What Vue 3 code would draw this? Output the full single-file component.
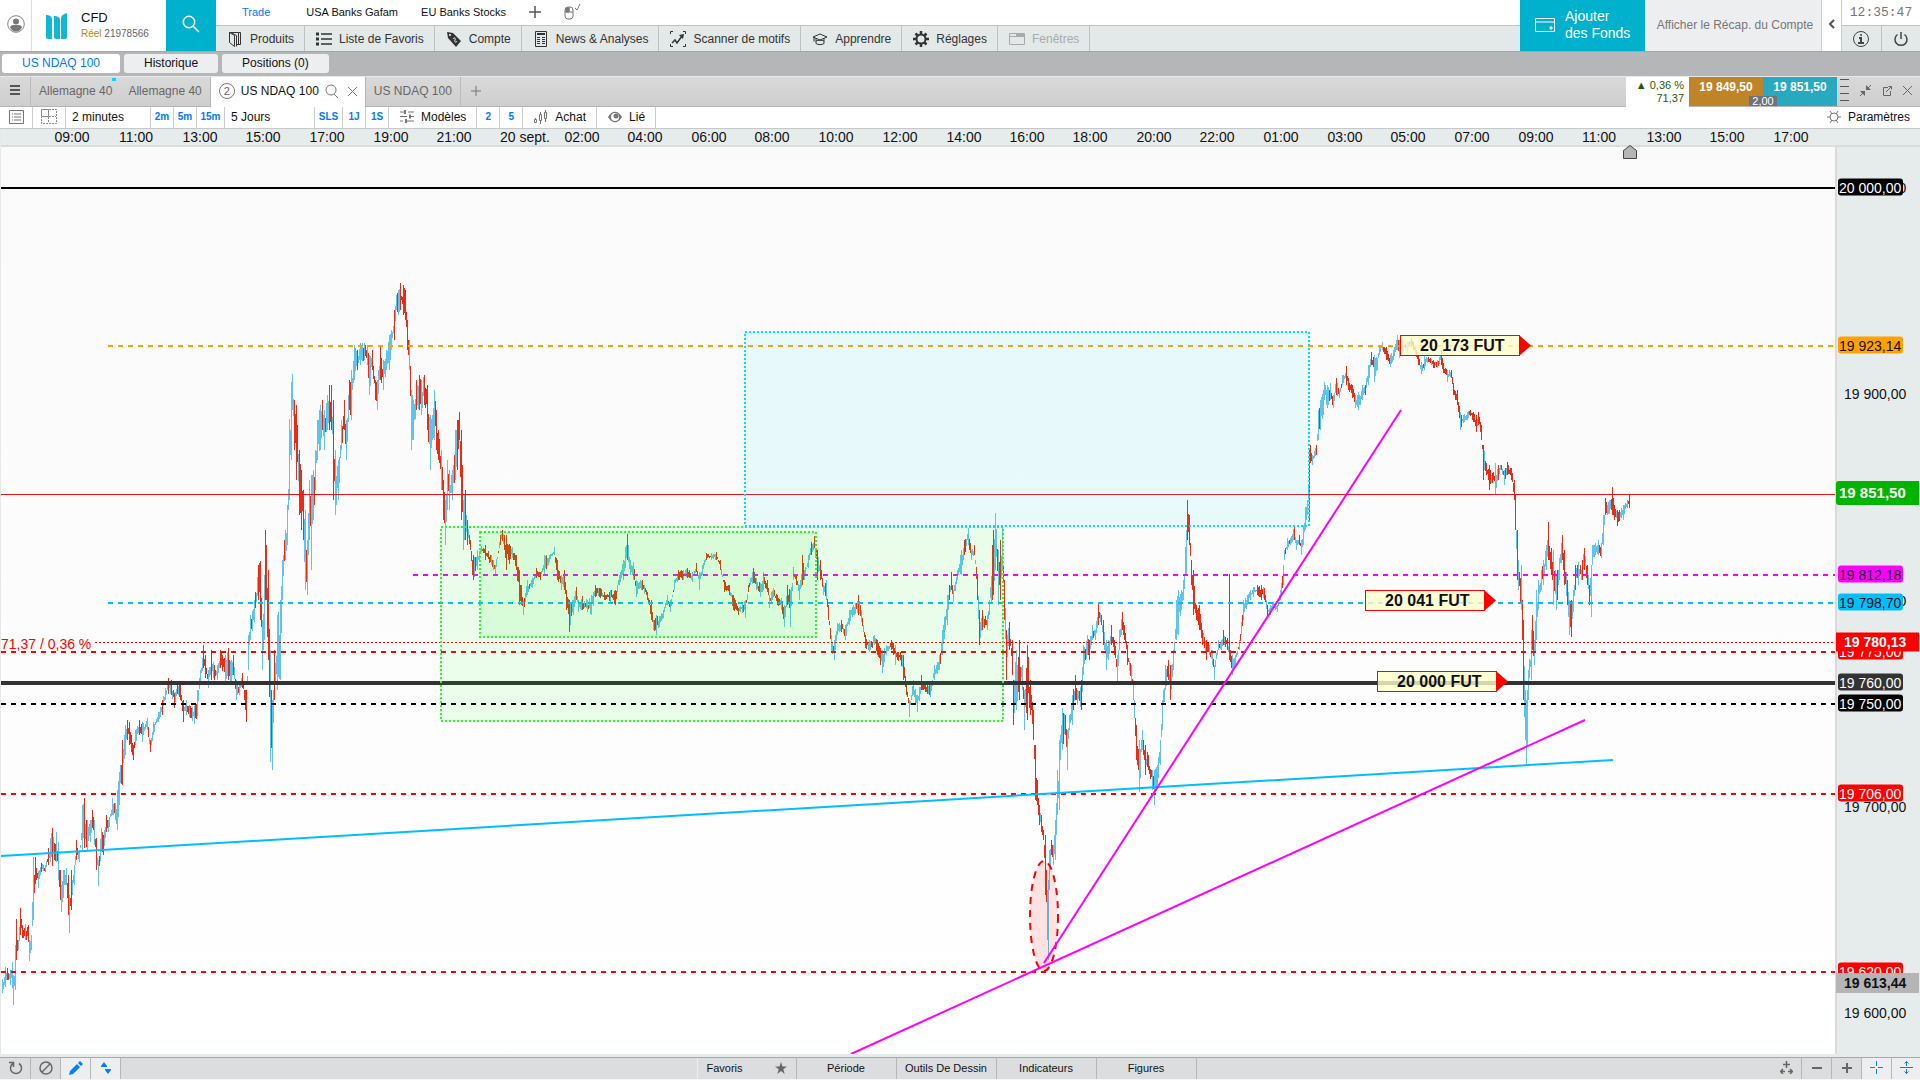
<script setup>
// visible area of the chart canvas
const view = { x: 1, y: 147, w: 1834, h: 907 };

const left = (x) => `${((x - view.x) / view.w) * 100}%`;
const top = (y) => `${((y - view.y) / view.h) * 100}%`;

// x high low
const swings = `
2 979 993,5 967 987,7 968 980,10 970 985,12 962 988,13 975 1005,15 945 990,16 919 960,18 940 950,20 908 935,22 925 938,
25 924 940,28 925 942,29 940 961,31 935 950,33 857 920,35 857 884,38 871 888,41 863 872,45 865 872,48 848 865,52 828 866,
56 832 862,58 842 880,60 870 900,61 885 912,63 870 898,66 868 885,68 875 915,69 895 933,71 870 910,74 865 885,76 840 860,
79 850 862,82 805 850,84 798 848,87 820 850,90 820 842,92 810 828,94 820 845,96 838 870,98 860 886,101 828 850,103 835 855,
106 815 832,108 820 832,112 798 815,115 803 820,117 790 830,119 772 805,122 740 785,125 725 755,127 720 740,129 722 745,
131 735 752,133 745 760,135 730 745,139 720 735,142 722 742,147 718 730,150 740 752,153 722 735,158 712 722,162 700 715,
165 688 700,168 678 694,171 680 695,174 693 708,177 684 694,180 682 700,183 700 722,186 700 715,190 706 718,194 706 724,
197 690 716,200 670 685,203 645 668,205 655 678,208 670 688,211 650 680,214 665 680,217 665 680,220 650 668,225 655 682,
228 648 680,231 660 683,233 655 675,236 680 700,239 685 695,242 673 688,244 690 700,246 690 722,248 635 670,250 615 640,
254 600 622,258 565 600,260 561 620,262 620 670,264 575 640,265 530 600,268 570 660,270 650 762,272 700 770,274 650 700,
277 615 690,280 600 680,282 560 600,285 530 560,287 505 545,289 419 500,291 382 460,292 374 410,294 400 450,296 405 480,
299 450 515,301 470 530,303 490 540,305 510 590,307 540 595,309 480 540,311 475 570,313 470 520,315 450 490,317 420 460,
320 405 450,322 400 430,324 410 450,327 395 430,329 385 430,331 385 430,333 400 500,335 450 515,338 460 500,341 420 450,
344 400 430,346 420 460,349 380 410,351 370 420,354 345 380,357 350 370,360 343 365,364 343 360,367 345 365,369 355 395,
372 350 370,375 380 400,377 380 410,380 345 380,383 360 390,386 350 370,389 335 370,391 330 350,394 310 340,396 295 310,
398 290 315,400 283 310,403 285 315,405 290 320,407 320 350,409 340 370,411 390 450,413 400 440,416 380 410,419 375 410,
421 380 415,424 375 405,427 385 430,430 415 470,432 415 440,434 390 440,436 410 450,438 430 460,441 450 490,443 480 520,
445 500 545,447 460 510,449 470 510,452 470 500,455 430 480,457 420 470,459 412 440,461 430 520,463 500 550,465 490 540,
467 520 545,470 540 550,472 560 575,473 555 580,477 550 570,481 546 552,485 545 560,491 555 565,495 565 575,500 535 545,
502 530 541,506 535 570,512 547 558,516 555 570,519 570 605,523 600 615,527 580 595,532 578 588,536 568 578,540 572 580,
544 555 575,549 555 562,554 547 555,557 560 580,561 575 590,564 570 590,566 590 610,569 600 632,573 600 615,576 587 600,
578 600 612,582 596 610,587 600 612,591 595 615,595 585 597,600 588 598,604 592 600,610 590 602,615 590 605,619 575 585,
623 560 580,627 534 560,630 560 575,633 562 580,636 580 597,642 580 590,647 592 600,651 600 620,653 620 630,656 615 635,
663 610 618,667 595 605,670 600 612,674 580 590,678 570 580,683 570 580,687 568 578,692 572 582,696 563 572,699 572 590,
702 565 575,706 553 560,711 553 560,716 552 560,720 560 570,724 580 592,729 585 595,733 595 610,738 608 615,742 603 613,
745 600 618,748 585 592,753 568 583,756 578 590,760 583 597,763 572 590,767 580 592,769 595 608,773 588 597,777 595 605,
781 598 610,784 605 627,787 585 605,790 590 627,793 567 580,796 575 585,799 585 600,802 555 585,804 570 580,808 555 568,
811 542 555,814 536 548,817 550 580,820 560 580,823 585 595,826 580 600,828 605 620,831 635 652,834 640 660,837 623 635,
841 620 632,845 625 640,849 610 625,853 605 615,858 595 615,861 610 622,865 635 648,869 640 652,874 635 645,877 640 655,
882 650 673,886 645 655,891 640 650,895 645 665,900 652 660,903 655 680,906 685 695,909 700 717,913 680 695,917 695 712,
921 675 690,925 683 692,930 685 697,934 665 680,939 655 670,942 630 655,947 595 625,949 585 600,951 572 590,953 590 602,
957 570 580,961 550 575,964 540 555,968 528 545,971 550 560,974 545 555,977 575 600,979 610 645,982 610 630,987 615 630,
989 600 615,992 545 600,993 530 595,995 513 570,998 550 605,1000 540 600,1002 528 570,1004 580 620,1006 630 680,
1009 622 650,1012 640 675,1013 680 725,1016 650 710,1019 640 700,1022 665 690,1024 690 730,1027 645 720,1030 680 715,
1033 710 740,1035 745 800,1037 780 805,1039 805 825,1041 815 832,1043 830 840,1045 835 895,1047 890 940,1048 880 960,
1049 850 890,1051 840 855,1053 845 865,1055 820 860,1057 770 815,1059 740 810,1060 735 760,1062 708 750,1065 715 735,
1067 730 770,1069 715 730,1072 695 725,1075 675 700,1077 690 705,1081 680 710,1083 645 675,1087 635 655,1089 640 660,
1092 625 640,1095 630 640,1098 603 625,1101 615 625,1103 620 645,1106 640 670,1108 640 660,1111 625 645,1114 640 655,
1117 655 685,1119 630 650,1122 612 630,1124 625 640,1127 645 665,1131 665 685,1133 680 700,1136 725 760,1139 740 792,
1142 730 750,1145 745 775,1148 755 770,1152 770 790,1154 770 805,1157 765 785,1160 740 765,1162 700 730,1165 665 690,
1168 660 680,1170 665 700,1173 650 670,1176 600 640,1178 590 635,1181 590 610,1183 580 600,1186 530 575,1187 500 540,
1189 515 545,1191 560 585,1193 570 615,1196 605 620,1199 605 630,1202 630 645,1206 640 660,1209 645 655,1212 650 665,
1214 665 680,1218 640 650,1221 640 650,1223 630 645,1227 638 650,1230 650 662,1232 655 675,1235 655 665,1239 640 650,
1243 600 620,1247 595 605,1250 590 600,1253 587 597,1257 585 595,1261 585 600,1264 588 600,1267 605 618,1270 605 615,
1273 602 608,1277 605 612,1280 590 600,1283 565 585,1284 550 560,1287 538 550,1290 538 545,1294 525 540,1296 540 550,
1299 535 545,1301 540 555,1303 525 545,1305 507 530,1307 500 515,1309 450 520,1310 445 463,1312 455 465,1316 445 455,
1318 410 440,1320 400 430,1323 390 415,1324 382 400,1327 385 408,1330 383 400,1333 395 408,1336 378 395,1339 390 398,
1342 375 385,1346 366 385,1348 378 390,1352 385 398,1355 395 408,1358 392 410,1362 385 400,1365 385 395,1368 365 385,
1371 352 365,1374 355 382,1377 358 370,1379 345 355,1382 342 350,1386 347 360,1390 355 367,1393 350 360,1397 335 350,
1399 340 358,1403 340 352,1407 342 352,1411 338 345,1415 345 355,1418 355 365,1421 362 374,1424 355 370,1428 357 362,
1433 360 368,1437 360 368,1441 350 365,1443 363 373,1447 370 382,1451 370 378,1453 383 395,1457 390 405,1460 412 430,
1463 415 423,1467 412 420,1470 410 416,1473 412 422,1476 415 432,1478 412 425,1481 425 440,1483 445 480,1486 463 475,
1489 465 490,1492 473 483,1495 463 495,1498 465 480,1501 465 470,1504 470 485,1507 462 475,1511 468 480,1514 480 500,
1515 495 530,1517 530 580,1518 560 590,1521 565 610,1522 600 640,1523 620 700,1525 690 740,1526 700 764,1527 690 745,
1528 670 700,1531 630 680,1532 615 650,1534 640 665,1536 590 640,1538 580 610,1541 570 590,1543 560 585,1546 545 570,
1548 522 560,1551 548 575,1553 550 605,1556 575 610,1557 570 600,1559 558 580,1562 535 560,1564 550 585,1567 580 605,
1569 600 635,1571 600 637,1573 590 612,1575 565 590,1578 562 585,1582 560 580,1584 548 570,1587 565 585,1589 585 605,
1591 565 617,1592 545 565,1595 543 555,1598 540 555,1601 543 558,1603 515 545,1605 498 515,1607 505 515,1612 487 515,
1614 505 520,1617 510 526,1621 508 518,1623 505 520,1627 500 508,1629 495 508
`.trim().split(",").map((row) => row.trim().split(" ").map(Number));

let seed = 7;
const random = () => {
  seed = (seed * 16807) % 2147483647;
  return seed / 2147483647;
};

const buildBars = () => {
  const bars = { up: "", down: "" };
  for (let i = 0; i < swings.length; i++) {
    const [x, high, low] = swings[i];
    const [nextX, nextHigh, nextLow] = swings[i + 1] || [x + 1, high, low];
    for (let px = x; px < nextX; px++) {
      const t = (px - x) / (nextX - x);
      let h = high + (nextHigh - high) * t;
      let l = low + (nextLow - low) * t;
      if (px > x) {
        const cut = (l - h) * 0.45;
        h += random() * cut;
        l -= random() * cut;
      }
      const rising = nextHigh + nextLow < high + low;
      const side = random() < (rising ? 0.85 : 0.25) ? "up" : "down";
      bars[side] += `M${px} ${Math.round(h)}h1V${Math.round(l)}h-1z`;
    }
  }
  bars.down += "M1229 574h1v86h-1z";
  return bars;
};
const bars = buildBars();

const levels = [
  { y: 188, from: 1, kind: "black-solid" },
  { y: 346, from: 108, kind: "orange" },
  { y: 575, from: 413, kind: "magenta" },
  { y: 603, from: 108, kind: "blue" },
  { y: 652, from: 1, kind: "red" },
  { y: 683, from: 1, kind: "thick" },
  { y: 704, from: 1, kind: "black" },
  { y: 794, from: 1, kind: "red" },
  { y: 972, from: 1, kind: "red" },
];

const notes = [
  { x: 1400, y: 335, text: "20 173 FUT" },
  { x: 1365, y: 590, text: "20 041 FUT" },
  { x: 1377, y: 671, text: "20 000 FUT" },
];

const times = [
  [72, "09:00"], [136, "11:00"], [200, "13:00"], [263, "15:00"], [327, "17:00"], [391, "19:00"], [454, "21:00"],
  [525, "20 sept."], [582, "02:00"], [645, "04:00"], [709, "06:00"], [772, "08:00"], [836, "10:00"], [900, "12:00"],
  [964, "14:00"], [1027, "16:00"], [1090, "18:00"], [1154, "20:00"], [1217, "22:00"], [1281, "01:00"], [1345, "03:00"],
  [1408, "05:00"], [1472, "07:00"], [1536, "09:00"], [1599, "11:00"], [1664, "13:00"], [1727, "15:00"], [1791, "17:00"],
];

const prices = [
  { y: 188, text: "20 000,00", kind: "plain" },
  { y: 394, text: "19 900,00", kind: "plain" },
  { y: 601, text: "19 800,00", kind: "plain" },
  { y: 807, text: "19 700,00", kind: "plain" },
  { y: 1013, text: "19 600,00", kind: "plain" },
  { y: 187, text: "20 000,00", kind: "tag black" },
  { y: 345, text: "19 923,14", kind: "tag orange" },
  { y: 574, text: "19 812,18", kind: "tag magenta" },
  { y: 602, text: "19 798,70", kind: "tag blue" },
  { y: 651, text: "19 775,00", kind: "tag red" },
  { y: 682, text: "19 760,00", kind: "tag dark" },
  { y: 703, text: "19 750,00", kind: "tag black" },
  { y: 793, text: "19 706,00", kind: "tag red" },
  { y: 971, text: "19 620,00", kind: "tag red" },
  { y: 493, text: "19 851,50", kind: "wide green" },
  { y: 642, text: "19 780,13", kind: "wide close" },
  { y: 983, text: "19 613,44", kind: "wide cursor" },
];
</script>

<template>
  <div class="app">
    <header class="header">
      <button class="user" aria-label="Profil">
        <svg width="18" height="18" viewBox="0 0 18 18">
          <circle cx="9" cy="9" r="8.3" fill="#fff" stroke="#888" />
          <circle cx="9" cy="6.5" r="3" fill="#777" />
          <path d="M3 12c1-2 3-2 6-2s5 0 6 2c-1.5 3-3 4.5-6 4.5S4.5 15 3 12z" fill="#777" />
        </svg>
      </button>
      <div class="brand">
        <svg width="22" height="26" viewBox="0 0 22 26" fill="#0fb9d6">
          <path d="M0 2c3 0 6 1 6 4v20H2c-1 0-2-1-2-2zM8 3c3 0 6 1 6 4v19h-4c-1 0-2-1-2-2zM15 6c0-4 3-5 6-6v24c0 1-1 2-2 2h-4z" />
        </svg>
        <div class="account">
          <span class="type">CFD</span>
          <span class="number"><b>Réel</b> 21978566</span>
        </div>
      </div>
      <button class="search" aria-label="Rechercher">
        <svg width="18" height="18" viewBox="0 0 18 18" fill="none" stroke="#fff" stroke-width="1.5">
          <circle cx="7" cy="7" r="5.7" />
          <path d="M11 11l6 6" />
        </svg>
      </button>

      <div class="navs">
        <nav class="workspaces">
          <a href="#" class="current">Trade</a>
          <a href="#">USA Banks Gafam</a>
          <a href="#">EU Banks Stocks</a>
          <button aria-label="Ajouter un espace">
            <svg width="12" height="12" viewBox="0 0 12 12" stroke="#555" stroke-width="1.5"><path d="M6 0v12M0 6h12" /></svg>
          </button>
          <button aria-label="Souris">
            <svg width="17" height="16" viewBox="0 0 17 16" fill="none" stroke="#777">
              <rect x="1" y="3" width="8" height="12" rx="3" />
              <path d="M1 8h8M5 3v5M11 4l2 2 3-6" />
              <path d="M2 4h3v4H2z" fill="#777" />
            </svg>
          </button>
        </nav>
        <nav class="menu">
          <button>
            <svg width="16" height="16" viewBox="0 0 16 16" fill="none" stroke="#333"><path d="M2.500 1.500h9v12h-2M11.500 1.500h2v12h-3M2.500 1.500v10l5 4v-11zM4 1.500l5.500 3v11" /></svg>
            Produits
          </button>
          <button>
            <svg width="16" height="16" viewBox="0 0 16 16" fill="none" stroke="#333" stroke-width="1.5"><path d="M5 3h11M5 8h11M5 13h11" /><path d="M0 3h3M0 8h3M0 13h3" stroke-width="3" /></svg>
            Liste de Favoris
          </button>
          <button>
            <svg width="16" height="16" viewBox="0 0 16 16"><path d="M1 1l6 1 8 8-5 6-8-9z" fill="#333" /><circle cx="4" cy="4" r="1" fill="#fff" /><path d="M7 8c1-2 3-1 2 1s1 3 2 1" fill="none" stroke="#fff" /></svg>
            Compte
          </button>
          <button>
            <svg width="16" height="16" viewBox="0 0 16 16" fill="none" stroke="#333"><path d="M2.500.5h11v15h-11z" /><path d="M4 3h8" stroke-width="2" /><path d="M4 6.500h3M4 8.500h3M4 10.500h3M4 12.500h3M9 6.500h3M9 10.500h3M9 12.500h3M9 8.500h3" /></svg>
            News &amp; Analyses
          </button>
          <button>
            <svg width="16" height="16" viewBox="0 0 16 16" fill="none" stroke="#333"><path d="M.5 3V.5H3M13 .5h2.500V3M15.500 13v2.500H13M3 15.500H.5V13" /><path d="M2 12l3-3 2 3 5-7" stroke-width="1.5" /><path d="M9 4l5-1-1 5z" fill="#333" stroke="none" /></svg>
            Scanner de motifs
          </button>
          <button>
            <svg width="16" height="16" viewBox="0 0 16 16" fill="none" stroke="#333"><path d="M1 6l7-3 7 3-7 3zM4 7.500v5c2 1.500 6 1.500 8 0v-5M2 6.500v4M4 10c2-1 6-1 8 0" /></svg>
            Apprendre
          </button>
          <button>
            <svg width="16" height="16" viewBox="0 0 16 16" fill="none" stroke="#333"><circle cx="8" cy="8" r="4.5" stroke-width="2" /><path d="M8 0v3M8 13v3M0 8h3M13 8h3M2.500 2.500l2 2M11.500 11.500l2 2M13.500 2.500l-2 2M4.500 11.500l-2 2" stroke-width="2.5" /></svg>
            Réglages
          </button>
          <button class="off" disabled>
            <svg width="16" height="16" viewBox="0 0 16 16" fill="none" stroke="#aaa"><path d="M.5 2.500h15v11H.5zM0 5.500h16" /><path d="M7 4h8" stroke-width="2" /></svg>
            Fenêtres
          </button>
        </nav>
      </div>

      <button class="funds">
        <svg width="20" height="14" viewBox="0 0 20 14" fill="none" stroke="#fff"><path d="M.5.5h19v13H.5zM0 4h20" /><path d="M15 9h2v2h-2z" fill="#fff" /></svg>
        <span>Ajouter<br />des Fonds</span>
      </button>
      <button class="summary">Afficher le Récap. du Compte</button>
      <button class="collapse" aria-label="Réduire">
        <svg width="6" height="10" viewBox="0 0 6 10" fill="none" stroke="#555" stroke-width="2"><path d="M5 1L1 5l4 4" /></svg>
      </button>
      <div class="status">
        <time>12:35:47</time>
        <div class="power">
          <button aria-label="Informations">
            <svg width="18" height="18" viewBox="0 0 18 18" fill="none" stroke="#444"><circle cx="9" cy="9" r="7.5" /><path d="M7 8h2v5M6 13h6" stroke-width="2" /><circle cx="9" cy="5" r="1" fill="#444" stroke="none" /></svg>
          </button>
          <button aria-label="Déconnexion">
            <svg width="16" height="16" viewBox="0 0 16 16" fill="none" stroke="#444" stroke-width="1.5"><path d="M4.500 3.500a6 6 0 1 0 7 0M8 1v7" /></svg>
          </button>
        </div>
      </div>
    </header>

    <nav class="panels">
      <button class="active">US NDAQ 100</button>
      <button>Historique</button>
      <button>Positions (0)</button>
    </nav>

    <section class="charts">
      <button class="burger" aria-label="Menu">
        <svg width="10" height="11" viewBox="0 0 10 11" stroke="#555" stroke-width="2"><path d="M0 1h10M0 5h10M0 9h10" /></svg>
      </button>
      <button class="tab">Allemagne 40<i class="dot"></i></button>
      <button class="tab">Allemagne 40</button>
      <div class="tab open">
        <span class="count">2</span>
        <span class="name">US NDAQ 100</span>
        <svg width="14" height="14" viewBox="0 0 14 14" fill="none" stroke="#777"><circle cx="6" cy="6" r="5" /><path d="M9 10l4 4" /></svg>
        <button class="close" aria-label="Fermer l'onglet">
          <svg width="9" height="9" viewBox="0 0 9 9" stroke="#777"><path d="M0 0l9 9M9 0L0 9" /></svg>
        </button>
      </div>
      <button class="tab last">US NDAQ 100</button>
      <button class="plus" aria-label="Nouvel onglet">
        <svg width="10" height="10" viewBox="0 0 10 10" stroke="#777"><path d="M5 0v10M0 5h10" /></svg>
      </button>

      <div class="change"><span>▲ 0,36 %</span><span>71,37</span></div>
      <div class="quotes">
        <button class="sell">19 849,50</button>
        <button class="buy">19 851,50</button>
        <span class="spread">2,00</span>
      </div>
      <div class="tools">
        <svg width="9" height="24" viewBox="0 0 9 24" stroke="#555"><path d="M0 .5h9M0 7.500h9M0 14.500h9M0 21.500h9" /></svg>
        <button aria-label="Réduire le graphique">
          <svg width="11" height="11" viewBox="0 0 11 11" fill="#666" stroke="#666"><path d="M11 0L8 3M0 11l3-3" /><path d="M6 0v5h5zM0 6h5v5z" stroke="none" /></svg>
        </button>
        <button aria-label="Détacher">
          <svg width="9" height="10" viewBox="0 0 9 10" fill="none" stroke="#666"><path d="M5 1.500H.5v8h7V5M3 6l5-5M5.500.5h3v3" /></svg>
        </button>
        <button aria-label="Fermer">
          <svg width="9" height="9" viewBox="0 0 9 9" stroke="#666"><path d="M0 0l9 9M9 0L0 9" /></svg>
        </button>
      </div>
    </section>

    <div class="toolbar">
      <button class="cell square" aria-label="Liste">
        <svg width="15" height="14" viewBox="0 0 15 14" fill="none" stroke="#777"><path d="M.5.5h14v13H.5zM3 4h1M5 4h7M3 7h1M5 7h7M3 10h1M5 10h7" /></svg>
      </button>
      <button class="cell square" aria-label="Disposition">
        <svg width="16" height="15" viewBox="0 0 16 15" fill="none" stroke="#888"><path d="M.5.5h7v7h-7z" /><path d="M8 .5h7.500v14H.5V8M7.500 8v6M8 7.500h7" stroke-dasharray="2 1" /></svg>
      </button>
      <button class="cell period">2 minutes</button>
      <button class="cell chip">2m</button>
      <button class="cell chip">5m</button>
      <button class="cell chip long">15m</button>
      <button class="cell range">5 Jours</button>
      <button class="cell chip long">SLS</button>
      <button class="cell chip">1J</button>
      <button class="cell chip">1S</button>
      <button class="cell models">
        <svg width="14" height="13" viewBox="0 0 14 13" stroke="#777"><path d="M0 2h14M0 6.500h14M0 11h14" /><path d="M6 0v4M9 4.500v4M5 9v4" stroke-width="4" stroke="#fff" /><path d="M5 0v4M10 4.500v4M6 9v4" stroke-width="2" /></svg>
        Modèles
      </button>
      <button class="cell chip">2</button>
      <button class="cell chip">5</button>
      <button class="cell order">
        <svg width="14" height="14" viewBox="0 0 14 14" fill="#fff" stroke="#777"><path d="M1.500 8v5M6.500 2v12M11.500 0v12" /><path d="M.5 9.500h2v3h-2zM5.500 4.500h2v6h-2zM10.500 2.500h2v6h-2z" /></svg>
        Achat
      </button>
      <button class="cell linked">
        <svg width="14" height="12" viewBox="0 0 14 12"><path d="M0 6c4-7 10-7 14 0-4 7-10 7-14 0z" fill="#777" /><circle cx="7" cy="6" r="4" fill="#fff" /><circle cx="8" cy="5" r="2.5" fill="#777" /></svg>
        Lié
      </button>
      <button class="settings">
        <svg width="14" height="14" viewBox="0 0 14 14" fill="none" stroke="#777"><circle cx="7" cy="7" r="4" /><path d="M0 7h3M11 7h3M3 1l2 3M11 1L9 4M3 13l2-3M11 13l-2-3" /></svg>
        Paramètres
      </button>
    </div>

    <main class="chart">
      <div class="times">
        <span v-for="[x, label] in times" :key="x" :style="{ left: left(x) }">{{ label }}</span>
      </div>
      <div class="corner"></div>

      <div class="plot">
        <svg class="canvas" viewBox="1 147 1834 907" preserveAspectRatio="none">
          <path class="up" :d="bars.up" />
          <path class="down" :d="bars.down" />
          <line v-for="l in levels" :key="l.y" :class="['level', l.kind]" :x1="l.from" :x2="1835" :y1="l.y" :y2="l.y" />
          <path class="last-price" d="M1 494h1834v1H1z" />
          <path class="previous" d="M95 642H1835" />
          <rect class="zone green" x="441" y="527" width="562" height="194" />
          <rect class="zone green inner" x="480" y="532" width="336" height="105" />
          <rect class="zone cyan" x="745" y="332" width="564" height="194" />
          <ellipse class="low" cx="1044" cy="916" rx="14" ry="55" />
          <path class="trend blue" d="M1 856L1613 760" />
          <path class="trend" d="M1044 963L1401 410M851 1054L1585 720" />
        </svg>
        <span class="delta" :style="{ top: top(644) }">71,37 / 0,36 %</span>
        <span v-for="n in notes" :key="n.text" class="note" :style="{ left: left(n.x), top: top(n.y) }">{{ n.text }}</span>
        <svg class="marker" :style="{ left: left(1630) }" width="14" height="14" viewBox="0 0 14 14">
          <path d="M.5 5.500L7 .5l6.500 5v8H.5z" fill="#b5b5b5" stroke="#444" />
        </svg>
      </div>

      <div class="prices">
        <span v-for="p in prices" :key="p.kind + p.text" :class="['price', p.kind]" :style="{ top: top(p.y) }">{{ p.text }}</span>
      </div>
    </main>

    <footer class="footer">
      <button class="icon" aria-label="Rafraîchir">
        <svg width="14" height="14" viewBox="0 0 14 14" fill="none" stroke="#666" stroke-width="1.5"><path d="M4 2.500a5.500 5.500 0 1 0 6 0M0 1.500h4.500V6" /></svg>
      </button>
      <button class="icon" aria-label="Effacer">
        <svg width="14" height="14" viewBox="0 0 14 14" fill="none" stroke="#666" stroke-width="1.5"><circle cx="7" cy="7" r="6" /><path d="M3 11l8-8" /></svg>
      </button>
      <button class="icon lit" aria-label="Dessiner">
        <svg width="14" height="14" viewBox="0 0 14 14" fill="#0080ff"><path d="M0 14l1-4 7-7 3 3-7 7zM9 2l2-2 3 3-2 2z" /></svg>
      </button>
      <button class="icon lit" aria-label="Ordre">
        <svg width="12" height="12" viewBox="0 0 12 12" fill="#0080ff"><path d="M1 4l3-4 3 4v1H1zM5 7h6v1l-3 4-3-4z" /></svg>
      </button>
      <div class="groups">
        <button class="favorites">Favoris
          <svg width="12" height="12" viewBox="0 0 12 12" fill="#666"><path d="M6 0l1.500 4.500H12L8.300 7.200 9.700 12 6 9.100 2.300 12l1.400-4.800L0 4.500h4.500z" /></svg>
        </button>
        <button>Période</button>
        <button>Outils De Dessin</button>
        <button>Indicateurs</button>
        <button>Figures</button>
      </div>
      <div class="zoom">
        <button class="icon" aria-label="Ajuster">
          <svg width="13" height="13" viewBox="0 0 13 13" fill="none" stroke="#666" stroke-width="1.5"><path d="M6.500 0v7M3 3.500h7M1 10.500h4M8 10.500h4M3 8L.5 10.500 3 13M10 8l2.500 2.500L10 13" /></svg>
        </button>
        <button class="icon" aria-label="Zoom arrière">
          <svg width="10" height="10" viewBox="0 0 10 10" stroke="#666" stroke-width="2"><path d="M0 5h10" /></svg>
        </button>
        <button class="icon" aria-label="Zoom avant">
          <svg width="10" height="10" viewBox="0 0 10 10" stroke="#666" stroke-width="2"><path d="M0 5h10M5 0v10" /></svg>
        </button>
        <button class="icon lit" aria-label="Réticule">
          <svg width="13" height="13" viewBox="0 0 13 13" stroke="#0080ff"><path d="M6.500 0v5M6.500 8v5M0 6.500h5M8 6.500h5" /></svg>
        </button>
        <button class="icon lit" aria-label="Échelle">
          <svg width="13" height="13" viewBox="0 0 13 13" fill="none" stroke="#0080ff"><path d="M0 6.500h13M6.500 0v5M6.500 8v5M4.500 2.500l2-2 2 2M4.500 10.500l2 2 2-2" /></svg>
        </button>
      </div>
    </footer>
  </div>
</template>

<style>
body {
  margin: 0;
}
</style>

<style scoped>
.app {
  display: flex;
  flex-direction: column;
  min-height: 100vh;
  font-family: "Liberation Sans", Arial, sans-serif;
  font-size: 12px;
  color: #111;
  background: #fff;
}
.app * {
  box-sizing: border-box;
}
button {
  display: flex;
  align-items: center;
  flex: none;
  margin: 0;
  padding: 0;
  border: 0;
  font: inherit;
  color: inherit;
  white-space: nowrap;
  background: none;
}
svg {
  display: block;
  flex: none;
}

/* header */
.header {
  display: flex;
  height: 52px;
  border-bottom: 1px solid #9fa6b2;
}
.user {
  justify-content: center;
  width: 32px;
  padding-bottom: 4px;
  border-right: 1px solid #ddd;
}
.brand {
  display: flex;
  align-items: center;
  gap: 13px;
  width: 134px;
  padding-left: 14px;
}
.account {
  display: flex;
  flex-direction: column;
  line-height: 16px;
}
.type {
  font-size: 13px;
}
.number {
  font-size: 10px;
  color: #666;
}
.number b {
  font-weight: normal;
  color: #b8860b;
}
.search {
  justify-content: center;
  width: 50px;
  padding-bottom: 4px;
  background: #00b1cd;
}
.navs {
  flex: 1;
  min-width: 0;
}
.workspaces {
  display: flex;
  align-items: center;
  gap: 23px;
  height: 25px;
  padding-left: 26px;
  padding-bottom: 2px;
  font-size: 11px;
}
.workspaces a {
  color: #111;
  text-decoration: none;
}
.workspaces .current {
  margin-right: 13px;
  color: #0078ff;
}
.menu {
  display: flex;
  height: 26px;
  color: #333;
  background: #e3e8e8;
  border-top: 1px solid #bfc4c4;
}
.menu button {
  gap: 7px;
  padding: 0 10px 0 11px;
  border-right: 1px solid #bbc0c0;
}
.menu .off {
  color: #aaa;
}
.funds {
  gap: 10px;
  width: 125px;
  padding-left: 15px;
  padding-bottom: 2px;
  font-size: 14px;
  line-height: 17px;
  text-align: left;
  color: #fff;
  background: #00b1cd;
}
.summary {
  justify-content: center;
  width: 177px;
  padding-left: 4px;
  padding-bottom: 2px;
  color: #777;
  background: #edeef0;
  border-right: 1px solid #ccc;
}
.collapse {
  justify-content: center;
  width: 19px;
  padding-bottom: 4px;
}
.status {
  display: flex;
  flex-direction: column;
  width: 79px;
  border-left: 1px solid #ccc;
}
.status time {
  height: 25px;
  font-family: "Liberation Mono", monospace;
  font-size: 13px;
  line-height: 26px;
  text-align: center;
  color: #777;
}
.power {
  display: flex;
  height: 26px;
  background: #e3e8e8;
  border-top: 1px solid #bfc4c4;
}
.power button {
  flex: 1;
  justify-content: center;
}
.power button + button {
  border-left: 1px solid #bbc0c0;
}

/* panel switcher */
.panels {
  display: flex;
  gap: 4px;
  height: 24px;
  padding: 2px;
  background: #b5b6b8;
}
.panels button {
  height: 19px;
  padding: 0 20px 2px;
  background: #edeef0;
  border-radius: 3px;
}
.panels .active {
  color: #0078ff;
  background: #fff;
}

/* chart tabs */
.charts {
  display: flex;
  height: 31px;
  color: #666;
  background: linear-gradient(#d9d9d9, #cecece);
  border-top: 1px solid #e8e8e8;
  border-bottom: 1px solid #b5b5b5;
}
.burger {
  justify-content: center;
  width: 31px;
  padding-bottom: 2px;
  border-right: 1px solid #bbb;
}
.tab {
  position: relative;
  display: flex;
  align-items: center;
  padding: 0 8px 2px;
}
.dot {
  position: absolute;
  top: 1px;
  right: 4px;
  width: 4px;
  height: 3px;
  background: #00d8ff;
}
.open {
  gap: 6px;
  height: 30px;
  color: #111;
  background: #fff;
  border-left: 1px solid #b5b5b5;
  border-right: 1px solid #b5b5b5;
}
.count {
  width: 16px;
  height: 16px;
  font-size: 11px;
  line-height: 14px;
  text-align: center;
  color: #666;
  border: 1px solid #777;
  border-radius: 50%;
}
.close {
  padding-left: 3px;
}
.last {
  border-right: 1px solid #bbb;
}
.plus {
  padding-left: 10px;
  padding-bottom: 2px;
}
.change {
  display: flex;
  flex-direction: column;
  justify-content: center;
  width: 63px;
  height: 30px;
  margin-left: auto;
  padding-right: 5px;
  font-size: 11px;
  line-height: 13px;
  text-align: right;
  white-space: nowrap;
  color: #1f5c0a;
  background: #fff;
}
.quotes {
  position: relative;
  display: flex;
}
.quotes button {
  justify-content: center;
  width: 74px;
  padding-bottom: 10px;
  font-weight: bold;
  color: #fff;
}
.sell {
  background: #c08428;
}
.buy {
  background: #27aabf;
}
.spread {
  position: absolute;
  left: 60px;
  bottom: 0;
  width: 28px;
  font-size: 11px;
  line-height: 10px;
  text-align: center;
  color: #fff;
  background: #6e7378;
}
.tools {
  display: flex;
  align-items: center;
  justify-content: space-between;
  width: 83px;
  padding: 0 8px 2px 3px;
}

/* toolbar */
.toolbar {
  display: flex;
  height: 22px;
  border-bottom: 1px solid #c5c8c8;
}
.toolbar button {
  padding-bottom: 2px;
}
.cell {
  border-right: 1px solid #ccc;
}
.square {
  justify-content: center;
  width: 33px;
}
.period {
  width: 85px;
  padding-left: 6px;
}
.range {
  width: 90px;
  padding-left: 6px;
}
.chip {
  justify-content: center;
  width: 23px;
  font-size: 10px;
  font-weight: bold;
  color: #0078ff;
}
.long {
  width: 28px;
}
.models,
.order,
.linked {
  gap: 7px;
  padding-left: 11px;
  padding-right: 10px;
}
.settings {
  gap: 7px;
  margin-left: auto;
  padding-right: 10px;
}

/* chart */
.chart {
  display: grid;
  flex: 1;
  grid-template-columns: 1fr 85px;
  grid-template-rows: 18px 1fr;
  min-height: 480px;
  border-left: 1px solid #e8e8e8;
}
.times,
.corner {
  background: #e6ecec;
  border-bottom: 2px solid #dadddd;
}
.times {
  position: relative;
  font-size: 14px;
  line-height: 16px;
}
.times span {
  position: absolute;
  white-space: nowrap;
  transform: translateX(-50%);
}
.plot {
  position: relative;
  background: linear-gradient(#fafafa, #fff);
}
.canvas {
  position: absolute;
  width: 100%;
  height: 100%;
}
.up {
  fill: #5fc4ec;
  shape-rendering: crispEdges;
}
.down {
  fill: #ee2a12;
  shape-rendering: crispEdges;
}
.level {
  stroke-width: 2;
  stroke-dasharray: 5 5;
}
.level.black-solid {
  stroke: #000;
  stroke-dasharray: none;
}
.level.orange {
  stroke: #ffa200;
}
.level.magenta {
  stroke: #f0f;
}
.level.blue {
  stroke: #00bfff;
}
.level.red {
  stroke: #f00;
}
.level.black {
  stroke: #000;
}
.level.thick {
  stroke: #333;
  stroke-width: 4;
  stroke-dasharray: none;
}
.last-price {
  fill: #e8141c;
}
.previous {
  stroke: #f00;
  stroke-width: 1;
  stroke-dasharray: 2 2;
  shape-rendering: crispEdges;
}
.zone {
  stroke-width: 2;
  stroke-dasharray: 2 2;
}
.zone.green {
  fill: rgba(0, 255, 0, 0.07);
  stroke: #2f2;
}
.zone.inner {
  fill: rgba(0, 255, 0, 0.08);
}
.zone.cyan {
  fill: rgba(0, 235, 255, 0.08);
  stroke: #00e0ff;
}
.low {
  fill: rgba(255, 0, 0, 0.11);
  stroke: #f00;
  stroke-width: 2;
  stroke-dasharray: 7 6;
}
.trend {
  fill: none;
  stroke: #f0f;
  stroke-width: 2;
}
.trend.blue {
  stroke: #00bfff;
}
.delta {
  position: absolute;
  left: 0;
  font-size: 14px;
  line-height: 16px;
  color: #f00;
  transform: translateY(-50%);
}
.note {
  position: absolute;
  width: 120px;
  height: 21px;
  padding-left: 19px;
  font-size: 16px;
  font-weight: bold;
  line-height: 19px;
  white-space: nowrap;
  background: rgba(255, 255, 204, 0.8);
  border: 1px solid #f00;
}
.note::after {
  position: absolute;
  top: -1px;
  left: 118px;
  width: 12px;
  height: 21px;
  content: "";
  background: #f00;
  clip-path: polygon(0 0, 100% 50%, 0 100%);
}
.marker {
  position: absolute;
  top: -2px;
  transform: translateX(-50%);
}
.prices {
  position: relative;
  background: #e6ecec;
  border-left: 2px solid #dadada;
}
.price {
  position: absolute;
  font-size: 14px;
  line-height: 17px;
  white-space: nowrap;
  transform: translateY(-50%);
}
.plain {
  left: 7px;
}
.tag {
  left: 1px;
  width: 65px;
  height: 17px;
  padding-left: 1px;
  line-height: 19px;
  border-radius: 3px;
}
.tag.orange {
  background: #ffa200;
}
.tag.magenta {
  background: #f0f;
}
.tag.blue {
  background: #00bfff;
}
.tag.red {
  color: #fff;
  background: #f00;
}
.tag.dark {
  color: #fff;
  background: #333;
}
.tag.black {
  color: #fff;
  background: #000;
}
.wide {
  left: -1px;
  width: 83px;
  padding-left: 8px;
  font-weight: bold;
}
.green.wide {
  padding-left: 3px;
  font-size: 15px;
  line-height: 24px;
  color: #fff;
  background: #00b400;
  border-radius: 3px 0 0 3px;
}
.close.wide {
  line-height: 19px;
  color: #fff;
  background: #f00;
}
.cursor.wide {
  line-height: 20px;
  background: #b5b5b5;
}

/* footer */
.footer {
  display: flex;
  height: 26px;
  padding-left: 1px;
  font-size: 11px;
  background: #dcddde;
  border-top: 3px solid #e6ecec;
  box-shadow: inset 0 1px #a5a9ab, inset 0 -1px #f5f5f5;
}
.footer button {
  height: 21px;
  margin-top: 1px;
  padding-bottom: 2px;
  border-right: 1px solid #b5b7b9;
}
.footer .icon {
  justify-content: center;
  width: 30px;
}
.footer .lit {
  background: #eceef0;
}
.groups {
  display: flex;
  margin: 0 auto;
}
.groups button {
  justify-content: center;
  width: 100px;
}
.groups .favorites {
  justify-content: space-between;
  padding-left: 9px;
  padding-right: 9px;
  border-left: 1px solid #eee;
}
.zoom {
  display: flex;
}
.zoom .icon:last-child {
  width: 28px;
  border-right: 0;
}
</style>
